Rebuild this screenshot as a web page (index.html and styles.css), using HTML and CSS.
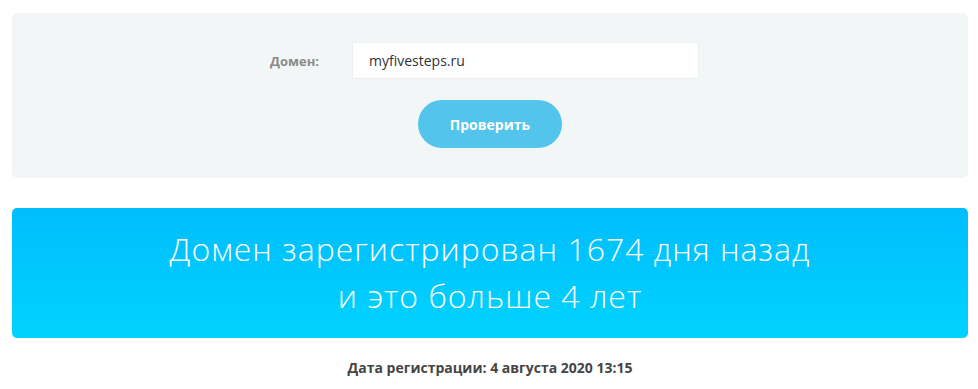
FILE: index.html
```html
<!DOCTYPE html>
<html lang="ru">
<head>
<meta charset="utf-8">
<title>Проверка домена</title>
<link rel="stylesheet" href="styles.css">
</head>
<body>
<main class="page">
  <form class="check-form">
    <div class="form-row">
      <label class="form-label" for="domain">Домен:</label>
      <input class="form-input" id="domain" type="text" value="myfivesteps.ru">
    </div>
    <button class="btn-check" type="button">Проверить</button>
  </form>
  <section class="result">
    <p class="result-line">Домен зарегистрирован 1674 дня назад</p>
    <p class="result-line">и это больше 4 лет</p>
  </section>
  <p class="reg-date">Дата регистрации: 4 августа 2020 13:15</p>
</main>
</body>
</html>
```
FILE: styles.css
```css
html, body {
  margin: 0;
  padding: 0;
  background: #ffffff;
}
body {
  font-family: "Open Sans", "DejaVu Sans", sans-serif;
  color: #444;
}
.page {
  margin: 13px 10px 0 12px;
}
.check-form {
  background: #f3f6f7;
  border-radius: 5px;
  height: 165px;
  box-sizing: border-box;
  padding-top: 29px;
  display: flex;
  flex-direction: column;
  align-items: center;
  gap: 21px;
}
.form-row {
  display: flex;
  align-items: center;
  gap: 33px;
  margin-left: -11px;
}
.form-label {
  font-size: 13px;
  font-weight: 700;
  color: #8a8a8a;
  width: 49px;
  text-align: right;
}
.form-input {
  width: 347px;
  height: 37px;
  box-sizing: border-box;
  border: 1px solid #eceff0;
  background: #fff;
  padding: 0 0 0 16px;
  font-family: inherit;
  font-size: 14px;
  color: #333;
  outline: none;
  margin: 0;
}
.btn-check {
  width: 144px;
  height: 48px;
  border: none;
  border-radius: 24px;
  background: #53c4eb;
  color: #fff;
  font-family: inherit;
  font-size: 14px;
  font-weight: 700;
  padding: 0;
  margin: 0;
}
.result {
  margin-top: 30px;
  height: 130px;
  box-sizing: border-box;
  border-radius: 5px;
  background: linear-gradient(180deg, #00bdfd 0%, #00d3fd 100%);
  display: flex;
  flex-direction: column;
  align-items: center;
  justify-content: center;
  padding-bottom: 2px;
}
.result-line {
  margin: 0;
  color: #fff;
  font-size: 32px;
  font-weight: 300;
  letter-spacing: 1px;
  line-height: 47px;
}
.reg-date {
  margin: 20px 0 0;
  text-align: center;
  font-size: 14px;
  font-weight: 700;
  color: #454545;
}
```
